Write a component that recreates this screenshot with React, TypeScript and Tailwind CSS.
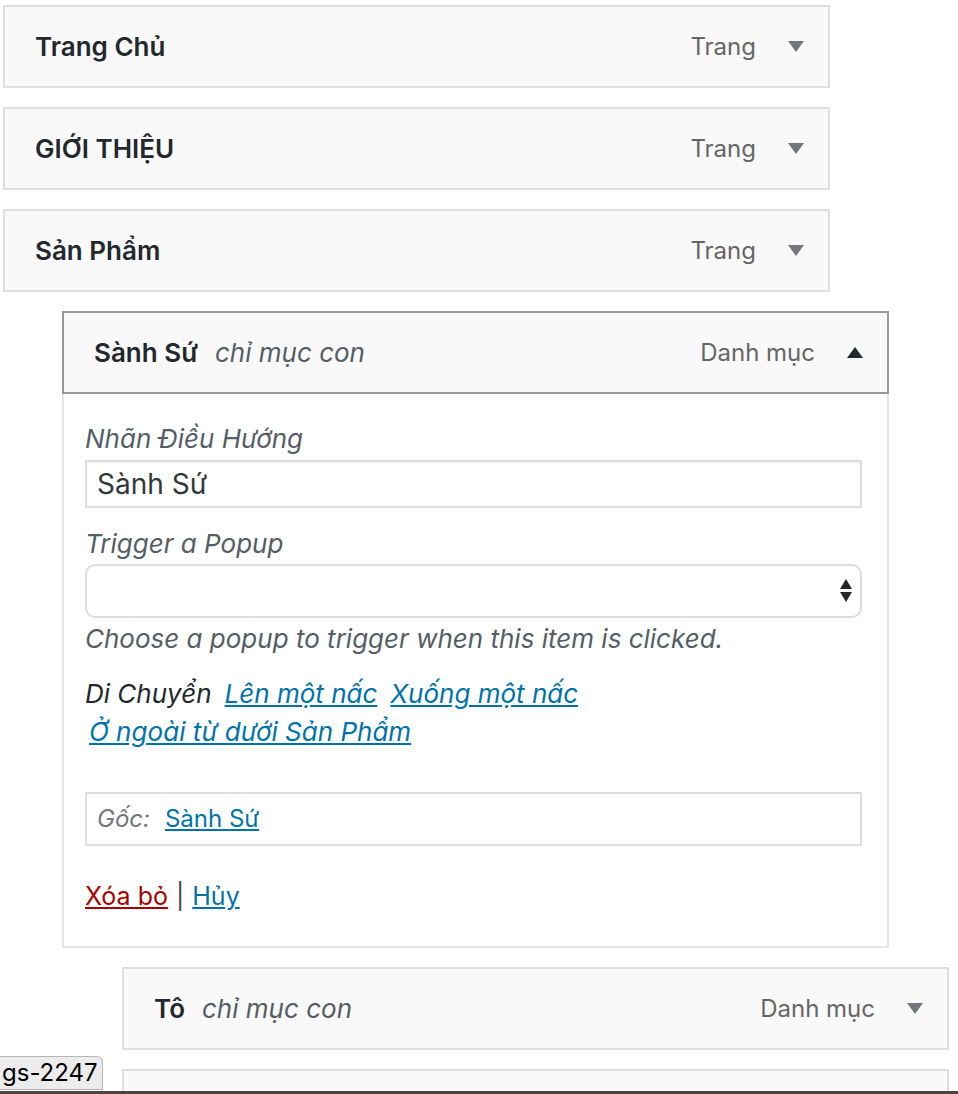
import React from 'react';

// ─── types ────────────────────────────────────────────────────────────────────

type MenuItem = {
  title: string;
  sub?: string;
  type: string;
  depth: 0 | 1 | 2;
  open?: boolean;
};

const ITEMS: MenuItem[] = [
  { title: 'Trang Chủ', type: 'Trang', depth: 0 },
  { title: 'GIỚI THIỆU', type: 'Trang', depth: 0 },
  { title: 'Sản Phẩm', type: 'Trang', depth: 0 },
  { title: 'Sành Sứ', sub: 'chỉ mục con', type: 'Danh mục', depth: 1, open: true },
  { title: 'Tô', sub: 'chỉ mục con', type: 'Danh mục', depth: 2 },
  { title: '', type: '', depth: 2 },
];

const FONT = { fontFamily: 'Inter, "Noto Sans", sans-serif' };

// ─── small drawings ───────────────────────────────────────────────────────────

function Arrow({ up }: { up?: boolean }) {
  return (
    <svg width="16" height="11" viewBox="0 0 16 11" className="shrink-0">
      {up ? (
        <polygon points="0,11 16,11 8,0" fill="#23282d" />
      ) : (
        <polygon points="0,0 16,0 8,11" fill="#72777c" />
      )}
    </svg>
  );
}

function SelectArrows() {
  return (
    <svg width="12" height="24" viewBox="0 0 12 24">
      <polygon points="0,10 12,10 6,0" fill="#23282d" />
      <polygon points="0,13 12,13 6,23" fill="#23282d" />
    </svg>
  );
}

// ─── item pieces ──────────────────────────────────────────────────────────────

const INDENT = ['ml-0', 'ml-[59px]', 'ml-[119px]'];

function Handle({ item }: { item: MenuItem }) {
  return (
    <div
      className={
        'flex items-center h-[83px] pl-[30px] pr-[24px] bg-[#f9f9f9] border-2 ' +
        (item.open ? 'border-[#999]' : 'border-[#dfdfdf]')
      }
    >
      <div className="flex-1 flex items-center gap-[17px] text-[26px] leading-[39px]">
        <span className="font-semibold text-[#23282d]">{item.title}</span>
        {item.sub && <span className="italic text-[#555d66]">{item.sub}</span>}
      </div>
      {item.type && (
        <>
          <span className="text-[24px] text-[#666]">{item.type}</span>
          <div className="ml-[32px]">
            <Arrow up={item.open} />
          </div>
        </>
      )}
    </div>
  );
}

function Settings() {
  return (
    <div className="bg-white border-2 border-t-0 border-[#e5e5e5] pt-[31px] pb-[36px] pl-[21px] pr-[25px]">
      <p className="italic text-[26px] leading-[28px] text-[#555d66]">Nhãn Điều Hướng</p>
      <div className="mt-[7px] h-[48px] flex items-center px-[10px] border-2 border-[#ddd] shadow-[inset_0_1px_2px_rgba(0,0,0,0.07)] text-[28px] text-[#32373c]">
        Sành Sứ
      </div>

      <p className="mt-[22px] italic text-[26px] leading-[28px] text-[#555d66]">Trigger a Popup</p>
      <div className="mt-[6px] h-[54px] flex items-center justify-end pr-[8px] border-2 border-[#ddd] rounded-[10px] bg-white">
        <SelectArrows />
      </div>
      <p className="mt-[7px] italic text-[26px] leading-[28px] text-[#555d66]">
        Choose a popup to trigger when this item is clicked.
      </p>

      <div className="mt-[22px] italic text-[26px] leading-[38px]">
        <div className="flex gap-[13px]">
          <span className="text-[#23282d]">Di Chuyển</span>
          <a className="text-[#0073aa] underline">Lên một nấc</a>
          <a className="text-[#0073aa] underline">Xuống một nấc</a>
        </div>
        <a className="block ml-[4px] text-[#0073aa] underline">Ở ngoài từ dưới Sản Phẩm</a>
      </div>

      <div className="mt-[41px] h-[54px] flex items-center gap-[15px] px-[10px] border-2 border-[#ddd] text-[24px]">
        <span className="italic text-[#72777c]">Gốc:</span>
        <a className="text-[#0073aa] underline">Sành Sứ</a>
      </div>

      <div className="mt-[36px] text-[25px] leading-[28px] flex gap-[8px]">
        <a className="text-[#a00] underline">Xóa bỏ</a>
        <span className="text-[#444]">|</span>
        <a className="text-[#0073aa] underline">Hủy</a>
      </div>
    </div>
  );
}

// ─── page ─────────────────────────────────────────────────────────────────────

export default function App() {
  return (
    <div className="relative h-[1094px] w-[958px] overflow-hidden bg-white flex flex-col" style={FONT}>
      <div className="flex-1 overflow-hidden pt-[5px] pl-[3px] flex flex-col gap-[19px]">
        {ITEMS.map((item, i) => (
          <div key={i} className={'w-[827px] shrink-0 ' + INDENT[item.depth]}>
            <Handle item={item} />
            {item.open && <Settings />}
          </div>
        ))}
      </div>
      <div className="h-[3px] bg-[#4d443d] shrink-0" />

      {/* status-bar tooltip */}
      <div className="absolute left-0 top-[1056px] w-[103px] h-[34px] pl-[2px] flex items-center bg-[#ececec] border border-l-0 border-[#b5b5b5] rounded-tr-[6px] text-[24px] text-black">
        gs-2247
      </div>
    </div>
  );
}
